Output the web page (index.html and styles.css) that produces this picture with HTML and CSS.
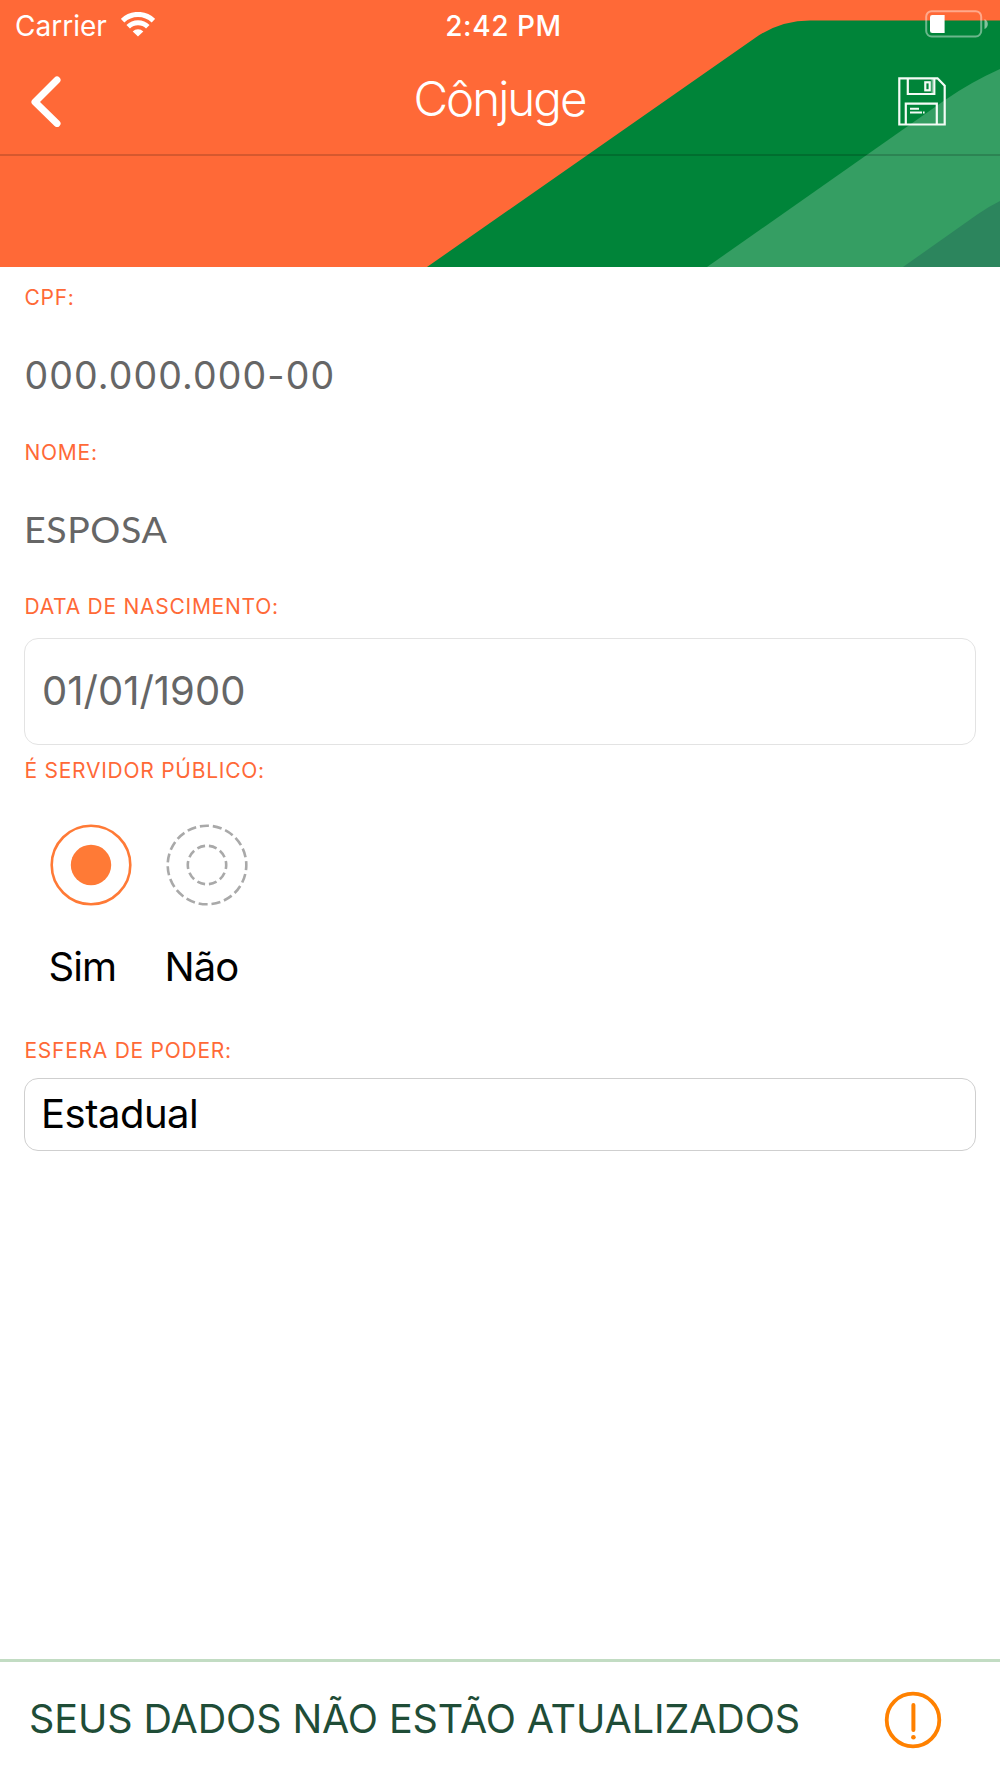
FILE: index.html
```html
<!DOCTYPE html>
<html lang="pt-BR">
<head>
<meta charset="utf-8">
<title>Cônjuge</title>
<link rel="stylesheet" href="styles.css">
</head>
<body>
<div class="screen">
  <header class="header">
    <svg class="header-art" viewBox="0 0 1000 267" aria-hidden="true">
      <path fill="#008439" d="M427 267 L755 38 Q780 20.5 810 20.5 H1000 V267Z"/>
      <path fill="#359e63" d="M707 267 L945 100 Q971 82 1000 69 V267Z"/>
      <path fill="#2c855d" d="M903 267 L978 214 Q988 207 1000 201 V267Z"/>
    </svg>
    <div class="status">
      <div class="carrier">
        <span class="carrier-name">Carrier</span>
        <svg class="wifi" width="34" height="25" viewBox="0 0 34 25" aria-hidden="true">
          <g fill="none" stroke="#fff" stroke-width="5">
            <path d="M1.6 8.6 A22.2 22.2 0 0 1 32.4 8.6"/>
            <path d="M7.2 14.8 A14 14 0 0 1 26.8 14.8"/>
          </g>
          <path fill="#fff" d="M17 24.5 L11.7 19.4 A7.6 7.6 0 0 1 22.3 19.4Z"/>
        </svg>
      </div>
      <span class="clock">2:42 PM</span>
      <svg class="battery" width="64" height="28" viewBox="0 0 64 28" aria-hidden="true">
        <rect x="1.2" y="1.2" width="55" height="25.3" rx="5.5" fill="none" stroke="#fff" stroke-opacity=".42" stroke-width="2"/>
        <path fill="#fff" d="M7.3 5 H19.6 V23 H7.3 Q5 23 5 20.7 V7.3 Q5 5 7.3 5Z"/>
        <path fill="#fff" fill-opacity=".5" d="M59.5 9 Q62.8 10.5 62.8 14 T59.5 19Z"/>
      </svg>
    </div>
    <nav class="navbar">
      <svg class="back" width="32" height="52" viewBox="0 0 32 52" aria-hidden="true">
        <path d="M27 5 L5 27 L27 48.5" fill="none" stroke="#fff" stroke-width="7" stroke-linecap="round" stroke-linejoin="round"/>
      </svg>
      <h1 class="title">Cônjuge</h1>
      <svg class="save" width="48" height="50" viewBox="0 0 48 50" fill="none" stroke="#f4fbf6" stroke-width="2.2" aria-hidden="true">
        <path d="M1.3 1.3 H39.5 L46.7 8.8 V47.5 H1.3Z"/>
        <path d="M9.8 1.5 V17 H36.3 V1.5"/>
        <path d="M34.2 1.5 V17" stroke-width="1.2" opacity=".6"/>
        <rect x="27.3" y="5.3" width="4.4" height="8"/>
        <path d="M7.8 47 V26.6 H38.8 V47"/>
        <path d="M12 31.7 H21 M12 35.5 H24 M25 35.5 H26.6" stroke-width="2"/>
      </svg>
    </nav>
  </header>

  <main class="form">
    <section class="field">
      <span class="label">CPF:</span>
      <span class="value number">000.000.000-00</span>
    </section>
    <section class="field">
      <span class="label">NOME:</span>
      <span class="value name">ESPOSA</span>
    </section>
    <section class="field">
      <span class="label">DATA DE NASCIMENTO:</span>
      <div class="box date">01/01/1900</div>
    </section>
    <section class="field">
      <span class="label">É SERVIDOR PÚBLICO:</span>
      <div class="options">
        <div class="option">
          <svg width="82" height="82" viewBox="0 0 82 82" aria-hidden="true">
            <circle cx="41" cy="41" r="39.3" fill="none" stroke="#ff7a36" stroke-width="2.6"/>
            <circle cx="41" cy="41" r="20.2" fill="#ff7a36"/>
          </svg>
          <span class="option-text">Sim</span>
        </div>
        <div class="option">
          <svg width="82" height="82" viewBox="0 0 82 82" fill="none" stroke="#a9a9a9" stroke-width="2.6" aria-hidden="true">
            <circle cx="41" cy="41" r="39.3" pathLength="190" stroke-dasharray="7 3" stroke-dashoffset="3"/>
            <circle cx="41" cy="41" r="19.2" pathLength="120" stroke-dasharray="8 4" stroke-dashoffset="4"/>
          </svg>
          <span class="option-text">Não</span>
        </div>
      </div>
    </section>
    <section class="field">
      <span class="label">ESFERA DE PODER:</span>
      <div class="box select">Estadual</div>
    </section>
  </main>

  <footer class="notice">
    <span class="notice-text">SEUS DADOS NÃO ESTÃO ATUALIZADOS</span>
    <svg width="58" height="58" viewBox="0 0 58 58" aria-hidden="true">
      <circle cx="29" cy="29" r="26.3" fill="none" stroke="#ff8100" stroke-width="3.8"/>
      <path d="M29.4 14 V39" stroke="#ff8100" stroke-width="4" stroke-linecap="round"/>
      <circle cx="29.4" cy="46.3" r="2.3" fill="#ff8100"/>
    </svg>
  </footer>
</div>
</body>
</html>
```
FILE: styles.css
```css
* { box-sizing: border-box; }
body { margin: 0; background: #fff; font-family: Inter, "Liberation Sans", sans-serif; }
.screen { width: 1000px; height: 1778px; display: flex; flex-direction: column; background: #fff; }

.header { position: relative; height: 267px; flex: none; background: #ff6937; color: #fff; }
.header-art { position: absolute; inset: 0; width: 1000px; height: 267px; }
.status { position: relative; height: 50px; display: grid; grid-template-columns: 1fr auto 1fr; padding: 0 11px 0 15px; }
.carrier { display: flex; gap: 14px; font-size: 28px; line-height: 52px; }
.wifi { margin-top: 12px; }
.clock { margin-left: 3px; font-size: 28px; line-height: 52px; font-weight: 550; letter-spacing: .6px; }
.battery { justify-self: end; margin-top: 10px; }
.navbar { position: relative; height: 106px; display: grid; grid-template-columns: 1fr auto 1fr; padding: 0 54px; border-bottom: 2px solid rgba(0, 0, 0, .16); }
.back { margin: 25px 0 0 -24px; }
.title { margin: 21px 0 0 -1px; font-size: 47.5px; line-height: 56px; font-weight: 300; letter-spacing: -2px; }
.save { justify-self: end; margin-top: 27px; }

.form { flex: 1; padding: 18px 24px 0; }
.field { display: flex; flex-direction: column; align-items: flex-start; }
.label { padding: 1px 0 0 .5px; font-size: 21px; line-height: 24px; letter-spacing: .74px; color: #ff6937; }
.value { color: #666; font-size: 37.5px; line-height: 44px; margin: 42px 0 43px; }
.number { margin: 44px 0 42px; padding-left: .5px; letter-spacing: 1.1px; }
.name { font-family: Lato, sans-serif; letter-spacing: .6px; }
.box { width: 952px; border: 1px solid #e3e3e3; border-radius: 14px; padding-left: 17px; font-size: 40px; }
.date { height: 107px; margin: 19px 0 13px; line-height: 103px; color: #666; }
.options { display: flex; gap: 34px; padding-left: 26px; margin: 41px 0 46px; }
.option { width: 82px; display: flex; flex-direction: column; gap: 36px; }
.option-text { margin-left: -1.5px; font-size: 40px; line-height: 50px; letter-spacing: -.9px; }
.select { height: 73px; margin-top: 15px; padding-left: 16px; border-color: #cfcfcf; line-height: 69px; letter-spacing: -.5px; }

.notice { height: 119px; flex: none; border-top: 3px solid #c2dcc3; display: flex; align-items: center; justify-content: space-between; padding: 0 58px 0 29px; color: #1f4d37; font-size: 39.5px; }
.notice-text { padding-bottom: 2px; letter-spacing: -.1px; }
```
